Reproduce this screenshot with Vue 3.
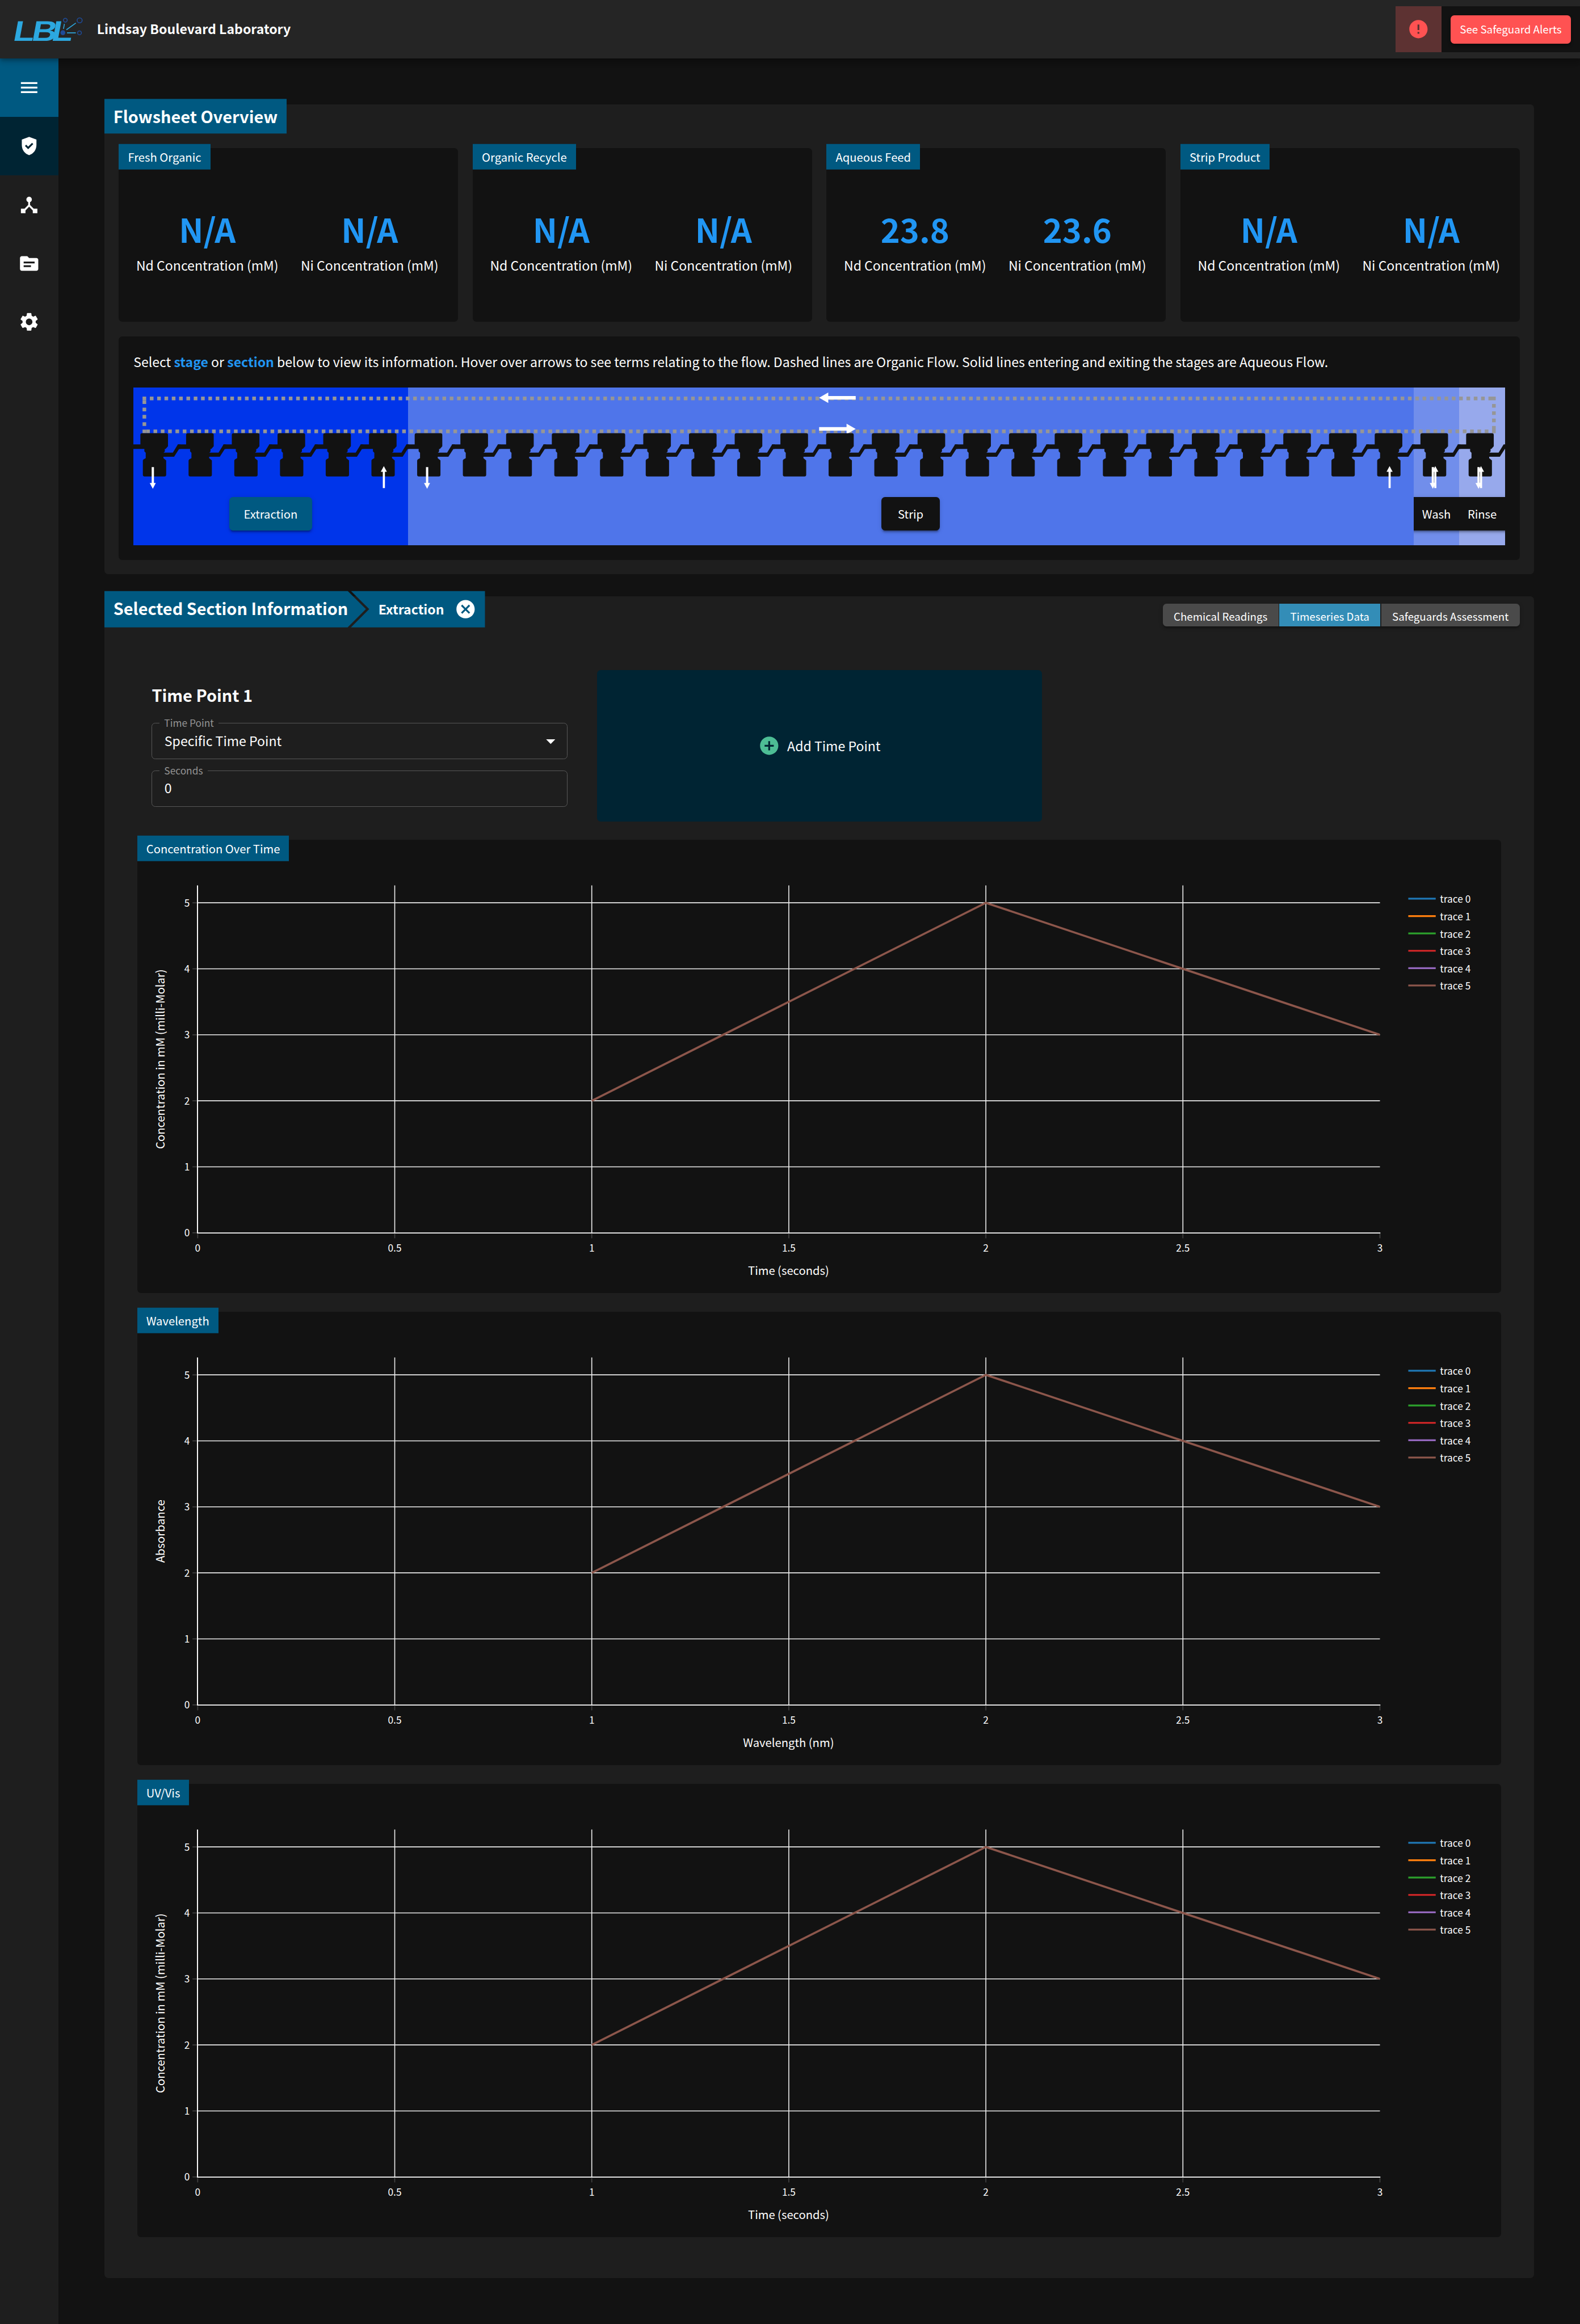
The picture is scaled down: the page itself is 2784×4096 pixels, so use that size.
<script setup>
import { ref } from 'vue'

const navItems = [
  { name: 'menu', path: 'M3 18h18v-2H3v2zm0-5h18v-2H3v2zm0-7v2h18V6H3z' },
  {
    name: 'safeguards',
    path: 'M12 2 4 5v6.09c0 5.05 3.41 9.76 8 10.91 4.59-1.15 8-5.86 8-10.91V5l-8-3zm-1.06 13.54L7.4 12l1.41-1.41 2.12 2.12 4.24-4.24 1.41 1.41-5.64 5.66z',
  },
  {
    name: 'network',
    path: 'm17 16-4-4V8.82C14.16 8.4 15 7.3 15 6c0-1.66-1.34-3-3-3S9 4.34 9 6c0 1.3.84 2.4 2 2.82V12l-4 4H3v5h5v-3.05l4-4.2 4 4.2V21h5v-5h-4z',
  },
  {
    name: 'files',
    path: 'M20 6h-8l-2-2H4c-1.1 0-1.99.9-1.99 2L2 18c0 1.1.9 2 2 2h16c1.1 0 2-.9 2-2V8c0-1.1-.9-2-2-2zm-6 10H6v-2h8v2zm4-4H6v-2h12v2z',
  },
  {
    name: 'settings',
    path: 'M19.14 12.94c.04-.3.06-.61.06-.94 0-.32-.02-.64-.07-.94l2.03-1.58c.18-.14.23-.41.12-.61l-1.92-3.32c-.12-.22-.37-.29-.59-.22l-2.39.96c-.5-.38-1.03-.7-1.62-.94l-.36-2.54c-.04-.24-.24-.41-.48-.41h-3.84c-.24 0-.43.17-.47.41l-.36 2.54c-.59.24-1.13.57-1.62.94l-2.39-.96c-.22-.08-.47 0-.59.22L2.74 8.87c-.12.21-.08.47.12.61l2.03 1.58c-.05.3-.09.63-.09.94s.02.64.07.94l-2.03 1.58c-.18.14-.23.41-.12.61l1.92 3.32c.12.22.37.29.59.22l2.39-.96c.5.38 1.03.7 1.62.94l.36 2.54c.05.24.24.41.48.41h3.84c.24 0 .44-.17.47-.41l.36-2.54c.59-.24 1.13-.56 1.62-.94l2.39.96c.22.08.47 0 .59-.22l1.92-3.32c.12-.22.07-.47-.12-.61l-2.01-1.58zM12 15.6c-1.98 0-3.6-1.62-3.6-3.6s1.62-3.6 3.6-3.6 3.6 1.62 3.6 3.6-1.62 3.6-3.6 3.6z',
  },
]
const activeNav = ref('safeguards')

const readings = [
  { title: 'Fresh Organic', nd: 'N/A', ni: 'N/A' },
  { title: 'Organic Recycle', nd: 'N/A', ni: 'N/A' },
  { title: 'Aqueous Feed', nd: '23.8', ni: '23.6' },
  { title: 'Strip Product', nd: 'N/A', ni: 'N/A' },
]

const sections = [
  { name: 'Extraction', stages: 6, color: '#0035ea' },
  { name: 'Strip', stages: 22, color: '#4f75ea' },
  { name: 'Wash', stages: 1, color: '#718eeb' },
  { name: 'Rinse', stages: 1, color: '#97a9ec' },
]
const selectedSection = ref('Extraction')
const stageCount = 30
const outlets = [0, 6, 28, 29]
const inlets = [5, 27, 28, 29]

const tabs = ['Chemical Readings', 'Timeseries Data', 'Safeguards Assessment']
const activeTab = ref('Timeseries Data')

const charts = [
  { title: 'Concentration Over Time', x: 'Time (seconds)', y: 'Concentration in mM (milli-Molar)' },
  { title: 'Wavelength', x: 'Wavelength (nm)', y: 'Absorbance' },
  { title: 'UV/Vis', x: 'Time (seconds)', y: 'Concentration in mM (milli-Molar)' },
]
const traceColors = ['#1f77b4', '#ff7f0e', '#2ca02c', '#d62728', '#9467bd', '#8c564b']
const xTicks = [0, 0.5, 1, 1.5, 2, 2.5, 3]
const yTicks = [0, 1, 2, 3, 4, 5]
const px = (v) => 66 + v * 431
const py = (v) => 430 - v * 72.2
const points = [[1, 2], [2, 5], [3, 3]].map(([x, y]) => `${px(x)},${py(y)}`).join(' ')
</script>

<template>
  <div class="app">
    <header class="topbar">
      <svg class="logo" viewBox="0 0 540 270">
        <text class="logo-text" transform="translate(0 209) skewX(-10.5) scale(1.22 1)" x="15.9 115 222.4" y="0">LBL</text>
        <g fill="none" stroke="#1f4b99" stroke-width="6">
          <circle cx="369" cy="73" r="12.5" />
          <circle cx="463" cy="74" r="16.5" />
          <circle cx="462" cy="156" r="12.5" />
        </g>
        <circle cx="353" cy="155" r="16" fill="#1f4b99" />
        <path d="M363 97l-6 33M438 92l-62 44M380 156h58" fill="none" stroke="#2ca5dc" stroke-width="6" />
      </svg>
      <h1 class="brand">Lindsay Boulevard Laboratory</h1>
      <div class="alerts">
        <div class="alert-icon">
          <svg class="icon" viewBox="0 0 24 24">
            <path d="M12 2C6.48 2 2 6.48 2 12s4.48 10 10 10 10-4.48 10-10S17.52 2 12 2zm1 15h-2v-2h2v2zm0-4h-2V7h2v6z" />
          </svg>
        </div>
        <div class="alert-action"><button class="alert-button">See Safeguard Alerts</button></div>
      </div>
    </header>

    <div class="body">
      <nav class="sidebar">
        <a
          v-for="item in navItems"
          :key="item.name"
          class="nav-item"
          :class="{ toggle: item.name === 'menu', active: item.name === activeNav }"
        >
          <svg class="icon" viewBox="0 0 24 24"><path :d="item.path" /></svg>
        </a>
      </nav>

      <main class="content">
        <section class="panel overview">
          <h2 class="panel-badge">Flowsheet Overview</h2>
          <div class="readings">
            <article v-for="r in readings" :key="r.title" class="reading">
              <h3 class="tag">{{ r.title }}</h3>
              <div class="metric">
                <strong>{{ r.nd }}</strong>
                <span>Nd Concentration (mM)</span>
              </div>
              <div class="metric">
                <strong>{{ r.ni }}</strong>
                <span>Ni Concentration (mM)</span>
              </div>
            </article>
          </div>

          <div class="flow-card">
            <p class="hint">Select <b>stage</b> or <b>section</b> below to view its information. Hover over arrows to see terms relating to the flow. Dashed lines are Organic Flow. Solid lines entering and exiting the stages are Aqueous Flow.</p>
            <div class="flow">
              <div
                v-for="s in sections"
                :key="s.name"
                class="flow-section"
                :style="{ width: s.stages * 50 + 'px', background: s.color }"
              >
                <button class="section-button" :class="{ selected: s.name === selectedSection }" @click="selectedSection = s.name">{{ s.name }}</button>
              </div>
              <svg class="flow-lines" viewBox="0 0 3000 345">
                <defs>
                  <path
                    id="stage"
                    d="M-3 124.3H15.3V104Q15.3 100 19.3 100H71.7Q75.7 100 75.7 104V128.5L70.5 134.3H68.7V140L66 142.3H86.3L97.3 124.3H103V134.3H100L89 151.3H65.7V154.7L71.7 159.5V191Q71.7 194.7 68 194.7H24.4Q20.7 194.7 20.7 191V159.5L22 157.5L27 154.7V142.7L24 139.7V134.3H-3Z"
                  />
                </defs>
                <g fill="none" stroke="#969696" stroke-width="8" stroke-dasharray="8 8">
                  <path d="M20 24H2980" />
                  <path d="M2976 20V100" />
                  <path d="M28 96H2980" />
                  <path d="M24 28V92" />
                  <path d="M20 96H28" />
                </g>
                <path fill="#fff" d="M1500 22.5L1520 11V18.5H1580V26.5H1520V33.7Z" />
                <path fill="#fff" d="M1580 90.5L1560 79V86.5H1500V94.5H1560V102Z" />
                <use v-for="n in stageCount" :key="n" href="#stage" :x="(n - 1) * 100" fill="#121212" />
                <path
                  v-for="n in outlets"
                  :key="'out' + n"
                  fill="#fff"
                  d="M40 174H45V209H49L42.5 221.5L35.7 209H40Z"
                  :transform="`translate(${n * 100} 0)`"
                />
                <path
                  v-for="n in inlets"
                  :key="'in' + n"
                  fill="#fff"
                  d="M47.8 172L54.5 184.5H50.2V220H45.6V184.5H41.2Z"
                  :transform="`translate(${n * 100} 0)`"
                />
                <path fill="#000" fill-opacity=".15" d="M2844 185H2846V208H2844ZM2944 185H2946V208H2944Z" />
              </svg>
            </div>
          </div>
        </section>

        <section class="panel details">
          <div class="details-head">
            <div class="crumbs">
              <h2 class="crumb crumb-title">Selected Section Information</h2>
              <div class="crumb crumb-section">
                <span>{{ selectedSection }}</span>
                <svg class="icon" viewBox="0 0 24 24">
                  <path d="M12 2C6.47 2 2 6.47 2 12s4.47 10 10 10 10-4.47 10-10S17.53 2 12 2zm5 13.59L15.59 17 12 13.41 8.41 17 7 15.59 10.59 12 7 8.41 8.41 7 12 10.59 15.59 7 17 8.41 13.41 12 17 15.59z" />
                </svg>
              </div>
            </div>
            <div class="tabs">
              <button v-for="t in tabs" :key="t" class="tab" :class="{ current: t === activeTab }" @click="activeTab = t">{{ t }}</button>
            </div>
          </div>

          <div class="time-points">
            <div class="time-point">
              <h3>Time Point 1</h3>
              <div class="field">
                <label>Time Point</label>
                <span>Specific Time Point</span>
                <svg class="icon" viewBox="0 0 24 24"><path d="m7 10 5 5 5-5z" /></svg>
              </div>
              <div class="field">
                <label>Seconds</label>
                <span>0</span>
              </div>
            </div>
            <button class="add-point">
              <svg class="icon" viewBox="0 0 24 24">
                <path d="M12 2C6.48 2 2 6.48 2 12s4.48 10 10 10 10-4.48 10-10S17.52 2 12 2zm5 11h-4v4h-2v-4H7v-2h4V7h2v4h4v2z" />
              </svg>
              <span>Add Time Point</span>
            </button>
          </div>

          <article v-for="c in charts" :key="c.title" class="chart">
            <h3 class="tag">{{ c.title }}</h3>
            <svg class="plot" viewBox="0 0 1492 496">
              <g stroke="#eee" stroke-width="1">
                <line v-for="v in xTicks.slice(1, 6)" :key="'gx' + v" :x1="px(v)" :x2="px(v)" y1="50" y2="430" />
                <line v-for="v in yTicks.slice(1)" :key="'gy' + v" x1="66" x2="1359" :y1="py(v)" :y2="py(v)" />
              </g>
              <g stroke="#444" stroke-width="1">
                <line v-for="v in xTicks" :key="'tx' + v" :x1="px(v)" :x2="px(v)" y1="431" y2="436" />
                <line v-for="v in yTicks" :key="'ty' + v" x1="60.3" x2="65.5" :y1="py(v)" :y2="py(v)" />
              </g>
              <path d="M65.8 50V430.2H1359.500" fill="none" stroke="#fff" stroke-width="1.2" />
              <svg x="66" y="50" width="1293" height="380" viewBox="66 50 1293 380">
                <polyline :points="points" fill="none" stroke="#8c564b" stroke-width="2.3" />
              </svg>
              <g class="tick-text" text-anchor="middle">
                <text v-for="v in xTicks" :key="'lx' + v" :x="px(v)" y="450.7">{{ v }}</text>
              </g>
              <g class="tick-text" text-anchor="end">
                <text v-for="v in yTicks" :key="'ly' + v" x="57.4" :y="py(v) + 4">{{ v }}</text>
              </g>
              <text class="axis-title" x="712.2" y="476.1" text-anchor="middle">{{ c.x }}</text>
              <text class="axis-title" transform="translate(29.9 240) rotate(-90)" text-anchor="middle">{{ c.y }}</text>
              <g v-for="(color, i) in traceColors" :key="color">
                <line x1="1390" x2="1420" :y1="64.5 + i * 19" :y2="64.5 + i * 19" :stroke="color" stroke-width="2" />
                <text class="tick-text" x="1424.7" :y="69.1 + i * 19">trace {{ i }}</text>
              </g>
            </svg>
          </article>
        </section>
      </main>
    </div>
  </div>
</template>

<style>
body {
  margin: 0;
  background: #121212;
}
</style>

<style scoped>
.app {
  zoom: 1.611111;
  width: 1728px;
  height: 2542.3px;
  overflow: hidden;
  display: flex;
  flex-direction: column;
  background: #121212;
  color: #fff;
  font-family: "Noto Sans CJK JP", "Noto Sans", sans-serif;
  font-size: 14.33px;
}
h1, h2, h3, p { margin: 0; }
button {
  border: 0;
  padding: 0;
  color: inherit;
  font: inherit;
}
.icon {
  width: 24px;
  height: 24px;
  flex: none;
  fill: currentColor;
}

.topbar {
  position: relative;
  z-index: 1;
  flex: none;
  height: 64px;
  display: flex;
  align-items: center;
  background: #252525;
  box-shadow: 0 2px 4px -1px rgba(0, 0, 0, .2), 0 4px 5px rgba(0, 0, 0, .14), 0 1px 10px rgba(0, 0, 0, .12);
}
.logo {
  width: 90px;
  height: 45px;
  margin: 1px 6px 0 10px;
}
.logo-text {
  font: bold 187px "Liberation Sans", Arial, sans-serif;
  fill: #2ca8e0;
}
.brand {
  font-size: 14.33px;
  font-weight: 700;
  line-height: 22px;
  padding-bottom: 1.3px;
}
.alerts {
  margin-left: auto;
  display: flex;
  height: 50px;
}
.alert-icon {
  width: 50px;
  display: flex;
  align-items: center;
  justify-content: center;
  background: #5d3232;
  color: #ff5252;
}
.alert-action {
  display: flex;
  align-items: center;
  padding: 0 10px;
  background: #121212;
}
.alert-button {
  width: 131.5px;
  height: 31px;
  padding-bottom: 1px;
  border-radius: 4px;
  background: #ff5252;
  font-size: 11.64px;
  box-shadow: 0 2px 3px rgba(0, 0, 0, .4);
}

.body {
  flex: 1;
  display: flex;
}
.sidebar {
  width: 64px;
  background: #1e1e1e;
}
.nav-item {
  height: 64px;
  display: flex;
  align-items: center;
  justify-content: center;
}
.nav-item.toggle { background: #005981; }
.nav-item.active { background: #002433; }

.content {
  flex: 1;
  padding: 50px 50px 0;
}
.panel {
  box-sizing: border-box;
  background: #1e1e1e;
  border-radius: 0 4px 4px 4px;
}
.overview {
  height: 514.4px;
  padding: 0 16px;
}
.panel-badge {
  box-sizing: border-box;
  width: 199.4px;
  margin: 0 0 16px -16px;
  padding: 1px 0 1px 10px;
  background: #005981;
  font-size: 17.97px;
  line-height: 36px;
  white-space: nowrap;
  transform: translateY(-6px);
}
.readings {
  display: grid;
  grid-template-columns: repeat(4, 1fr);
  gap: 16px;
  margin-top: -6px;
}
.reading {
  box-sizing: border-box;
  height: 190px;
  padding: 0 8px;
  display: grid;
  grid-template-columns: 1fr 1fr;
  grid-template-rows: 24px auto;
  background: #121212;
  border-radius: 0 4px 4px 4px;
}
.tag {
  width: max-content;
  padding: 0 10px;
  background: #005981;
  font-size: 12.55px;
  font-weight: 400;
  line-height: 28px;
  transform: translateY(-4.5px);
}
.reading .tag {
  grid-column: 1 / -1;
  margin-left: -8px;
  height: 28px;
}
.metric {
  display: flex;
  flex-direction: column;
  align-items: center;
  padding-top: 39.3px;
}
.metric strong {
  color: #2196f3;
  font-size: 35.85px;
  line-height: 50px;
}
.metric span {
  line-height: 24px;
  margin-top: 2.8px;
}

.flow-card {
  box-sizing: border-box;
  height: 244.4px;
  margin-top: 16px;
  padding: 16px;
  background: #121212;
  border-radius: 4px;
}
.hint {
  height: 24px;
  margin-bottom: 16px;
  line-height: 22.6px;
}
.hint b { color: #2196f3; }
.flow {
  position: relative;
  display: flex;
  height: 172.5px;
  overflow: hidden;
}
.flow-section {
  flex: none;
  display: flex;
  align-items: flex-end;
  justify-content: center;
  overflow: hidden;
}
.section-button {
  flex: none;
  min-width: 64px;
  height: 36.5px;
  margin-bottom: 16px;
  padding: 0 16px;
  border-radius: 4px;
  background: #121212;
  font-size: 12.55px;
  box-shadow: 0 3px 1px -2px rgba(0, 0, 0, .2), 0 2px 2px rgba(0, 0, 0, .14), 0 1px 5px rgba(0, 0, 0, .12);
}
.section-button.selected { background: #005981; }
.flow-lines {
  position: absolute;
  inset: 0;
  width: 1500px;
  height: 172.5px;
  pointer-events: none;
}

.details {
  height: 1839.6px;
  margin-top: 24px;
}
.details-head {
  display: flex;
  justify-content: space-between;
  align-items: flex-start;
  height: 80.4px;
}
.crumbs {
  display: flex;
  transform: translateY(-6px);
}
.crumb {
  box-sizing: border-box;
  height: 40px;
  display: flex;
  align-items: center;
  background: #005981;
}
.crumb-title {
  width: 286.2px;
  padding: 0 0 1.8px 10px;
  font-size: 17.92px;
  white-space: nowrap;
  clip-path: polygon(0 0, 266.2px 0, 100% 50%, 266.2px 100%, 0 100%);
}
.crumb-section {
  width: 146.6px;
  margin-left: -16.4px;
  padding: 0 9px 0 30px;
  justify-content: space-between;
  font-weight: 700;
  clip-path: polygon(0 0, 100% 0, 100% 100%, 0 100%, 20px 50%);
}
.tabs {
  display: flex;
  gap: 1px;
  margin: 8.1px 16px 0 0;
  border-radius: 4px;
  overflow: hidden;
  box-shadow: 0 3px 1px -2px rgba(0, 0, 0, .2), 0 2px 2px rgba(0, 0, 0, .14), 0 1px 5px rgba(0, 0, 0, .12);
}
.tab {
  height: 24.5px;
  padding: 2.3px 12px 0;
  background: #4a4a4a;
  font-size: 11.63px;
  line-height: 21px;
}
.tab.current { background: #338db7; }

.time-points {
  display: grid;
  grid-template-columns: repeat(3, 1fr);
  gap: 16px;
  height: 166px;
  margin: 0 36px 20px;
}
.time-point {
  padding: 15px 16px 0;
}
.time-point h3 {
  box-sizing: border-box;
  height: 42.9px;
  padding-top: .6px;
  font-size: 17.94px;
  line-height: 23px;
}
.field {
  position: relative;
  box-sizing: border-box;
  height: 39.8px;
  margin-bottom: 12.2px;
  padding: 0 6px 0 13.3px;
  display: flex;
  align-items: center;
  justify-content: space-between;
  border: 1px solid #575757;
  border-radius: 4px;
}
.field label {
  position: absolute;
  top: -8.6px;
  left: 8px;
  padding: 0 5px;
  background: #1e1e1e;
  color: #949494;
  font-size: 10.74px;
  line-height: 16px;
}
.field span {
  line-height: 22px;
  padding-bottom: .8px;
}
.add-point {
  display: flex;
  align-items: center;
  justify-content: center;
  gap: 8px;
  border-radius: 4px;
  background: #002433;
}
.add-point .icon { fill: #4dbd95; }
.add-point span { padding-bottom: 1px; }

.chart {
  height: 496px;
  margin: 0 36px 20.2px;
  background: #121212;
  border-radius: 0 4px 4px 4px;
}
.chart .tag { margin-bottom: -28px; }
.plot {
  display: block;
  width: 1492px;
  height: 496px;
}
.tick-text {
  font-size: 10.74px;
  fill: #fff;
}
.axis-title {
  font-size: 12.55px;
  fill: #fff;
}
</style>
